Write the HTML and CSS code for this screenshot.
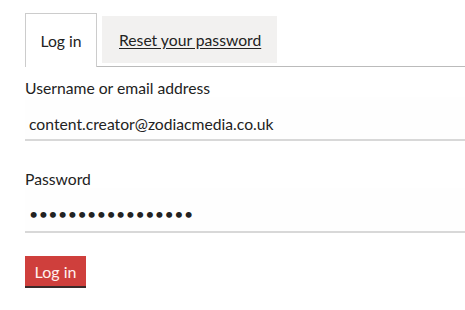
FILE: index.html
```html
<!DOCTYPE html>
<html>
<head>
<meta charset="utf-8">
<link rel="stylesheet" href="styles.css">
</head>
<body>
<div class="page">
  <div class="tabs">
    <div class="tab active">Log in</div>
    <div class="tab"><a href="#">Reset your password</a></div>
  </div>
  <form class="form">
    <div class="field">
      <label class="label">Username or email address</label>
      <div class="input">content.creator@zodiacmedia.co.uk</div>
    </div>
    <div class="field">
      <label class="label">Password</label>
      <div class="input dots">•••••••••••••••••</div>
    </div>
    <button class="btn" type="button">Log in</button>
  </form>
</div>
</body>
</html>
```
FILE: styles.css
```css
html, body { margin: 0; padding: 0; background: #fff; }
body { font-family: Lato, "Open Sans", sans-serif; font-size: 15.7px; color: #222; }
.page { padding: 13px 0 0 25px; }
.tabs { display: flex; align-items: flex-end; gap: 5px; border-bottom: 1px solid #bbb; height: 53px; }
.tab { box-sizing: border-box; }
.tab.active { width: 72px; height: 54px; border: 1px solid #ccc; border-bottom: none; background: #fff; margin-bottom: -1px; display: flex; align-items: center; justify-content: center; }
.tab:not(.active) { height: 47px; background: #f2f1f0; margin-bottom: 3px; padding: 0 16px 0 17px; display: flex; align-items: center; }
.tab a { color: #222; text-decoration: underline; text-underline-offset: 2px; }
.form { padding-top: 12px; }
.label { display: block; line-height: 18px; height: 18px; }
.input { box-sizing: border-box; height: 44px; padding: 18px 0 0 4px; line-height: 18px; border-bottom: 2px solid #d8d8d8; background: #fefefe; }
.field + .field { margin-top: 29px; }
.dots { font-size: 16px; letter-spacing: 0.4px; padding-top: 17px; height: 45px; }
.btn { margin-top: 23px; box-sizing: border-box; width: 61px; height: 32px; background: #cf3f3c; color: #fff0ee; border: none; border-bottom: 2px solid #3a2a2a; font-family: Lato, sans-serif; font-size: 16px; padding: 0; display: block; }
```
